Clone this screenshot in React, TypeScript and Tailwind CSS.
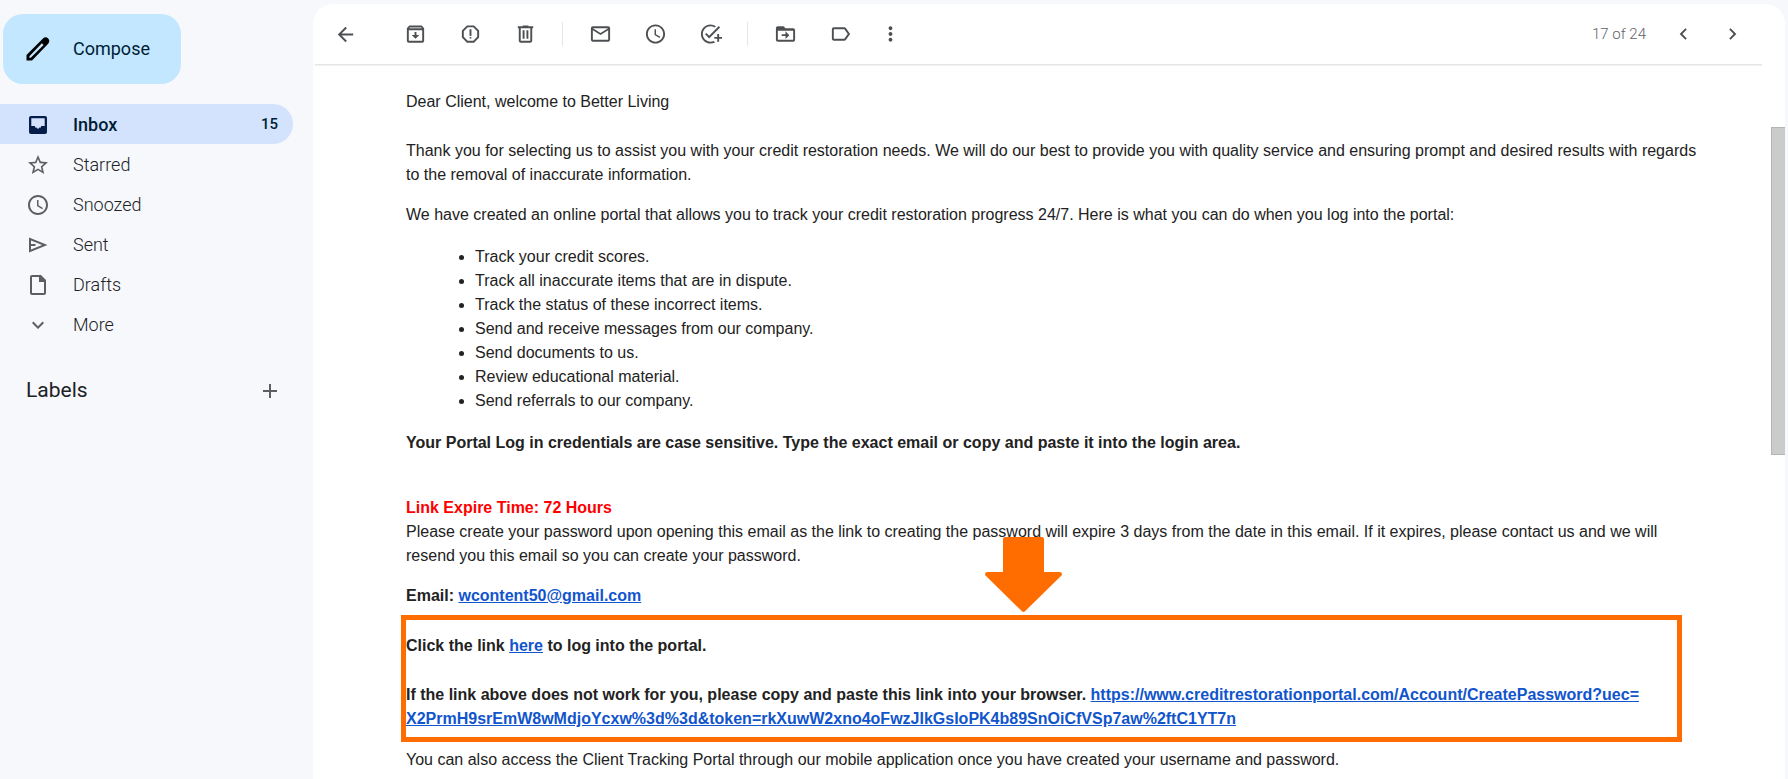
import React from "react";
import {
  MdAccessTime,
  MdAdd,
  MdAddTask,
  MdArrowBack,
  MdChevronLeft,
  MdChevronRight,
  MdExpandMore,
  MdLabelOutline,
  MdMoreVert,
  MdOutlineEmail,
  MdOutlineReport,
  MdStarOutline,
} from "react-icons/md";

function Glyph({ d }: { d: string }) {
  return (
    <svg viewBox="0 0 24 24" className="w-6 h-6 fill-current" fillRule="evenodd">
      <path d={d} />
    </svg>
  );
}

const glyphs = {
  pencil:
    "M.5 23.5v-5.600L17 1.500c1.600-1.600 3.800-1.500 5.200 0s1.500 3.600 0 5.200L6 23.500zM3.400 20.800h1.400L17.600 8 15.900 6.300 3.400 19.200z",
  inbox:
    "M5 3h14a2 2 0 0 1 2 2v14a2 2 0 0 1-2 2H5a2 2 0 0 1-2-2V5c0-1.100.9-2 2-2zM5.300 5.300v7.700h3.700v1.500h1.500L12 16l1.500-1.500H15V13h3.700V5.300z",
  send: "M3 4.500v15L21.500 12zM5 7.500 16.200 12 5 16.500V13h4.500v-2H5z",
  draft:
    "M6 2h9l5 5v13a2 2 0 0 1-2 2H6a2 2 0 0 1-2-2V4c0-1.100.9-2 2-2zM6 4v16h12V9h-5V4z",
  archive:
    "M5.500 3h13L21 6v13a2 2 0 0 1-2 2H5a2 2 0 0 1-2-2V6zM5 8v11h14V8zM6 5.200l-.6.8h13.200l-.6-.8zM11 10h2v3h3l-4 4-4-4h3z",
  trash:
    "M15 4V3H9v1H4v2h1v13c0 1.100.9 2 2 2h10c1.100 0 2-.9 2-2V6h1V4h-5zm2 15H7V6h10v13zM9 8h2v9H9zm4 0h2v9h-2z",
  move: "M4 4h6l2 2h8a2 2 0 0 1 2 2v10a2 2 0 0 1-2 2H4a2 2 0 0 1-2-2V6c0-1.100.9-2 2-2zM4 8.500V18h16V8.500zM12 9.200l4 4-4 4v-3H8v-2h4z",
};

const folders = [
  { name: "Inbox", icon: <Glyph d={glyphs.inbox} />, count: 15 },
  { name: "Starred", icon: <MdStarOutline size={24} /> },
  { name: "Snoozed", icon: <MdAccessTime size={24} /> },
  { name: "Sent", icon: <Glyph d={glyphs.send} /> },
  { name: "Drafts", icon: <Glyph d={glyphs.draft} /> },
  { name: "More", icon: <MdExpandMore size={24} /> },
];

const features = [
  "Track your credit scores.",
  "Track all inaccurate items that are in dispute.",
  "Track the status of these incorrect items.",
  "Send and receive messages from our company.",
  "Send documents to us.",
  "Review educational material.",
  "Send referrals to our company.",
];

function IconButton({ label, children }: { label: string; children: React.ReactNode }) {
  return (
    <button aria-label={label} className="flex items-center justify-center w-[23px] h-6 shrink-0">
      {children}
    </button>
  );
}

function Sidebar() {
  return (
    <aside className="w-[313px] shrink-0 pt-[14px] font-['Roboto',sans-serif]">
      <button className="ml-[3px] flex items-center w-[178px] h-[70px] pl-[23px] rounded-[20px] bg-[#c2e7ff] text-[#001d35] text-lg">
        <span className="text-black">
          <Glyph d={glyphs.pencil} />
        </span>
        <span className="ml-[23px]">Compose</span>
      </button>
      <nav className="mt-5 mr-5">
        {folders.map((f) => (
          <a
            key={f.name}
            href="#"
            className={
              f.count
                ? "flex items-center h-10 pt-0.5 pl-[26px] pr-[15px] rounded-r-full bg-[#d3e3fd] text-[#001d35] font-medium text-lg"
                : "flex items-center h-10 pt-0.5 pl-[26px] pr-[15px] text-[#202124] font-light text-lg"
            }
          >
            <span className={f.count ? "w-6 text-[#041e49]" : "w-6 text-[#5c5e60]"}>{f.icon}</span>
            <span className="ml-[23px] grow">{f.name}</span>
            {f.count && <span className="text-[15px]">{f.count}</span>}
          </a>
        ))}
      </nav>
      <div className="mt-[31px] ml-[26px] mr-[31px] h-8 flex items-center justify-between">
        <h2 className="text-[21px] text-[#202124]">Labels</h2>
        <button aria-label="Create new label" className="text-[#5c5e60]">
          <MdAdd size={24} />
        </button>
      </div>
    </aside>
  );
}

function Toolbar() {
  return (
    <div className="flex items-center h-[61px] mr-[23px] ml-0.5 pl-[19px] border-b border-[#e4e5e6] shadow-[0_1px_1px_#f3f3f3] text-[#4d5053]">
      <IconButton label="Back"><MdArrowBack size={23} /></IconButton>
      <div className="flex items-center gap-8 ml-[47px]">
        <IconButton label="Archive"><Glyph d={glyphs.archive} /></IconButton>
        <IconButton label="Report spam"><MdOutlineReport size={24} /></IconButton>
        <IconButton label="Delete"><Glyph d={glyphs.trash} /></IconButton>
      </div>
      <div className="w-px h-6 ml-[25px] mr-[26px] bg-[#e4e6e8]" />
      <div className="flex items-center gap-8">
        <IconButton label="Mark as unread"><MdOutlineEmail size={24} /></IconButton>
        <IconButton label="Snooze"><MdAccessTime size={24} /></IconButton>
        <IconButton label="Add to tasks"><MdAddTask size={24} /></IconButton>
      </div>
      <div className="w-px h-6 ml-[25px] mr-[26px] bg-[#e4e6e8]" />
      <div className="flex items-center gap-8">
        <IconButton label="Move to"><Glyph d={glyphs.move} /></IconButton>
        <IconButton label="Labels"><MdLabelOutline size={24} /></IconButton>
      </div>
      <div className="ml-[27px]">
        <IconButton label="More"><MdMoreVert size={24} /></IconButton>
      </div>
      <span className="ml-auto mr-[26px] text-[15px] text-[#5f6368] font-['Roboto',sans-serif] font-light">
        17 of 24
      </span>
      <IconButton label="Newer"><MdChevronLeft size={24} /></IconButton>
      <div className="ml-[26px] mr-[18px]">
        <IconButton label="Older"><MdChevronRight size={24} /></IconButton>
      </div>
    </div>
  );
}

function Message() {
  return (
    <article className="grow pt-[25px] pl-[93px] pr-[71px] text-base leading-6 text-[#222]">
      <p>Dear Client, welcome to Better Living</p>
      <p className="mt-[25px]">
        Thank you for selecting us to assist you with your credit restoration needs. We will do our best to provide you
        with quality service and ensuring prompt and desired results with regards to the removal of inaccurate
        information.
      </p>
      <p className="mt-4">
        We have created an online portal that allows you to track your credit restoration progress 24/7. Here is what
        you can do when you log into the portal:
      </p>
      <ul className="mt-[18px] pl-[69px] list-disc">
        {features.map((item) => (
          <li key={item}>{item}</li>
        ))}
      </ul>
      <p className="mt-[18px] font-bold">
        Your Portal Log in credentials are case sensitive. Type the exact email or copy and paste it into the login
        area.
      </p>
      <p className="mt-[41px] font-bold text-[#ff0000]">Link Expire Time: 72 Hours</p>
      <p>
        Please create your password upon opening this email as the link to creating the password will expire 3 days
        from the date in this email. If it expires, please contact us and we will resend you this email so you can
        create your password.
      </p>
      <p className="mt-4 font-bold">
        Email:{" "}
        <a href="mailto:wcontent50@gmail.com" className="text-[#1155cc] underline">
          wcontent50@gmail.com
        </a>
      </p>
      <div className="relative mt-[7px] -ml-[5px] mr-[18px] pt-[14px] pb-[6px] border-[5px] border-[#ff6d01] font-bold">
        <svg viewBox="0 0 77 75" className="absolute left-[579px] -top-[83px] w-[77px] h-[75px] fill-[#ff6d01]">
          <path d="M20 0h37q2 0 2 2v33h16q3 1 1.500 3.500L40 74.300q-1.500 1.200-3 0L.5 38.500Q-1 36 2 35h16V2q0-2 2-2z" />
        </svg>
        <p>
          Click the link <a href="#" className="text-[#1155cc] underline">here</a> to log into the portal.
        </p>
        <p className="mt-[25px]">
          If the link above does not work for you, please copy and paste this link into your browser.{" "}
          <a href="#" className="text-[#1155cc] underline">
            https://www.creditrestorationportal.com/Account/CreatePassword?uec=
            <wbr />
            X2PrmH9srEmW8wMdjoYcxw%3d%3d&amp;token=rkXuwW2xno4oFwzJIkGsIoPK4b89SnOiCfVSp7aw%2ftC1YT7n
          </a>
        </p>
      </div>
      <p className="mt-[6px]">
        You can also access the Client Tracking Portal through our mobile application once you have created your
        username and password.
      </p>
    </article>
  );
}

export default function App() {
  return (
    <div className="flex min-h-screen bg-[#f6f8fc] font-['Liberation_Sans',Arial,sans-serif]">
      <Sidebar />
      <main className="grow min-w-0 mt-1 mr-[3px] flex flex-col bg-white rounded-t-[20px]">
        <Toolbar />
        <div className="flex grow">
          <Message />
          <div className="w-[14px] shrink-0 pt-[62px]">
            <div className="h-[328px] bg-[#cbcbcb] border border-r-0 border-[#b5b5b5]" />
          </div>
        </div>
      </main>
    </div>
  );
}
